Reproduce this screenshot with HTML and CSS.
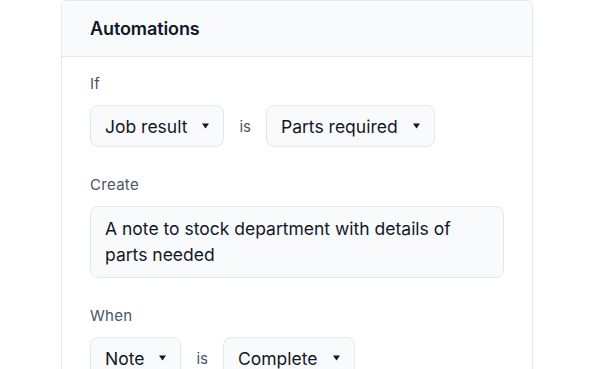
FILE: index.html
```html
<!DOCTYPE html>
<html>
<head>
<meta charset="utf-8">
<link rel="stylesheet" href="styles.css">
</head>
<body>
<div class="card">
  <div class="card-header">Automations</div>
  <div class="card-body">
    <div class="field">
      <div class="label">If</div>
      <div class="row">
        <div class="select">Job result <svg class="caret" width="7" height="6" viewBox="0 0 7 6"><polygon points="0,0.5 7,0.5 3.5,5.5" fill="#111827"/></svg></div>
        <span class="is">is</span>
        <div class="select">Parts required <svg class="caret" width="7" height="6" viewBox="0 0 7 6"><polygon points="0,0.5 7,0.5 3.5,5.5" fill="#111827"/></svg></div>
      </div>
    </div>
    <div class="field">
      <div class="label">Create</div>
      <div class="textbox">A note to stock department with details of parts needed</div>
    </div>
    <div class="field">
      <div class="label">When</div>
      <div class="row">
        <div class="select">Note <svg class="caret" width="7" height="6" viewBox="0 0 7 6"><polygon points="0,0.5 7,0.5 3.5,5.5" fill="#111827"/></svg></div>
        <span class="is">is</span>
        <div class="select">Complete <svg class="caret" width="7" height="6" viewBox="0 0 7 6"><polygon points="0,0.5 7,0.5 3.5,5.5" fill="#111827"/></svg></div>
      </div>
    </div>
  </div>
</div>
</body>
</html>
```
FILE: styles.css
```css
* { box-sizing: border-box; }
html, body { margin: 0; padding: 0; background: #ffffff; }
body {
  font-family: Inter, "Noto Sans", sans-serif;
  color: #111827;
  padding-left: 61px;
  height: 369px;
  overflow: hidden;
}
.card {
  width: 472px;
  border: 1px solid #e5e7eb;
  border-radius: 6px;
  height: 420px;
  overflow: hidden;
}
.card-header {
  background: #f9fafb;
  border-bottom: 1px solid #e5e7eb;
  height: 56px;
  padding-left: 28px;
  display: flex;
  align-items: center;
  font-size: 18px;
  font-weight: 600;
  letter-spacing: -0.1px;
}
.card-body {
  padding: 17px 28px 0 28px;
  display: flex;
  flex-direction: column;
  gap: 28px;
}
.label {
  font-size: 15px;
  color: #4b5563;
  line-height: 20px;
  margin-bottom: 11px;
  letter-spacing: 0.3px;
}
.row {
  display: flex;
  align-items: center;
}
.select {
  height: 42px;
  display: flex;
  align-items: center;
  padding: 0 14px 0 14px;
  border: 1px solid #e5e7eb;
  border-radius: 8px;
  background: #f9fafb;
  font-size: 17.5px;
}
.caret {
  margin-left: 15px;
  display: block;
}
.is {
  font-size: 15px;
  color: #4b5563;
  margin: 0 15px 0 15px;
}
.textbox {
  border: 1px solid #e5e7eb;
  border-radius: 8px;
  background: #f9fafb;
  font-size: 17.5px;
  line-height: 26px;
  padding: 9px 14px;
  width: 414px;
}
```
